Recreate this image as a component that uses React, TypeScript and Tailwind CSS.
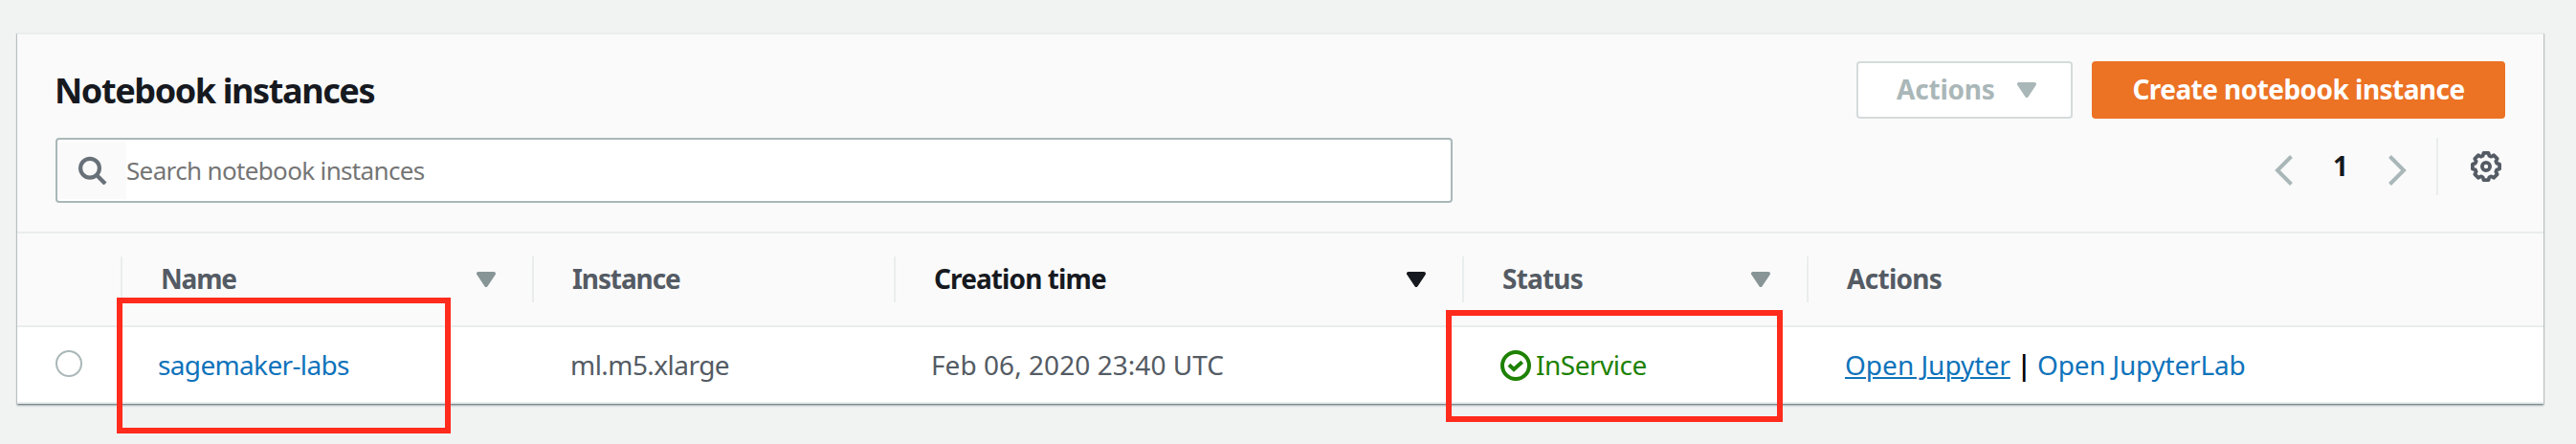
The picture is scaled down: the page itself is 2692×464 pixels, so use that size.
import React from 'react';
import { clsx } from 'clsx';

function Caret({ className }: { className: string }) {
  return (
    <svg viewBox="0 0 20 16" className={clsx('h-4 w-5 shrink-0', className)}>
      <path d="M2 2H18L10 14Z" fill="currentColor" stroke="currentColor" strokeWidth="4" strokeLinejoin="round" />
    </svg>
  );
}

function Chevron({ d }: { d: string }) {
  return (
    <svg viewBox="0 0 20 32" className="mt-2 h-8 w-5 text-[#aab7b8]">
      <path d={d} fill="none" stroke="currentColor" strokeWidth="4" />
    </svg>
  );
}

const polar = (r: number, deg: number) => {
  const a = (deg * Math.PI) / 180;
  return `${(16 + r * Math.sin(a)).toFixed(2)} ${(16 - r * Math.cos(a)).toFixed(2)}`;
};
const gearOutline =
  'M' +
  Array.from({ length: 8 }, (_, i) => i * 45)
    .flatMap((a) => [polar(11.7, a - 17), polar(14.3, a - 10), polar(14.3, a + 10), polar(11.7, a + 17)])
    .join('L') +
  'Z';

function Gear() {
  return (
    <svg viewBox="0 0 32 32" className="h-8 w-8 text-[#545b64]">
      <path d={gearOutline} fill="none" stroke="currentColor" strokeWidth="3.8" strokeLinejoin="round" />
      <circle cx="16" cy="16" r="4.1" fill="none" stroke="currentColor" strokeWidth="3.8" />
    </svg>
  );
}

function HeadCell({
  label,
  text,
  caret,
  dark,
  last,
}: {
  label: string;
  text: string;
  caret?: string;
  dark?: boolean;
  last?: boolean;
}) {
  return (
    <div
      className={clsx(
        'flex h-12 items-center justify-between pl-[38px] font-bold',
        !last && 'border-r-2 border-[#eaeded] pr-[38px]',
        dark ? 'text-[#16191f]' : 'text-[#545b64]',
      )}
    >
      <span className={clsx('pb-[2px]', text)}>{label}</span>
      {caret && <Caret className={caret} />}
    </div>
  );
}

const columns = 'grid grid-cols-[110px_430px_378px_594px_360px_769px] items-center';

export default function App() {
  return (
    <div className="relative h-[464px] w-[2692px] overflow-hidden bg-[#f1f3f3] pt-[34px] pl-[18px] font-['Noto_Sans',sans-serif] text-[28px] leading-10 whitespace-nowrap">
      <section className="w-[2640px] border-t-2 border-[#eaeded] bg-[#fafafa] shadow-[0_2px_2px_0_rgba(0,28,36,0.3),1px_1px_1px_0_rgba(0,28,36,0.15),-1px_1px_1px_0_rgba(0,28,36,0.15)]">
        <header className="flex h-[206px] justify-between pr-10 pl-10">
          <div className="pt-[35px]">
            <h1 className="-ml-px text-[36px] leading-[48px] font-bold tracking-[-1.4px] text-[#16191f]">
              Notebook instances
            </h1>
            <div className="mt-[25px] flex h-[68px] w-[1460px] items-center overflow-hidden rounded-[4px] border-2 border-[#aab7b8] bg-white">
              <div className="flex h-[60px] w-[72px] items-center bg-[#fafafa] pl-[22px]">
                <svg viewBox="0 0 30 30" className="h-[30px] w-[30px] text-[#687078]">
                  <circle cx="12" cy="12.7" r="9.9" fill="none" stroke="currentColor" strokeWidth="4.2" />
                  <path d="M19 20L28 29" fill="none" stroke="currentColor" strokeWidth="4.2" />
                </svg>
              </div>
              <span className="text-[26px] tracking-[-0.65px] text-[#757575]">Search notebook instances</span>
            </div>
          </div>
          <div className="flex flex-col items-end gap-5 pt-7">
            <div className="flex gap-5 font-bold">
              <button className="flex h-[60px] w-[226px] items-center rounded-[4px] border-2 border-[#d5dbdb] bg-white pl-10 text-[#aab7b8]">
                <span className="w-[126px] pb-[2px] text-left tracking-[-0.2px]">Actions</span>
                <Caret className="text-[#aab7b8]" />
              </button>
              <button className="flex h-[60px] w-[432px] items-center justify-center rounded-[4px] bg-[#ec7224] pb-[2px] tracking-[-0.55px] text-white">
                Create notebook instance
              </button>
            </div>
            <div className="flex h-[60px] items-center">
              <Chevron d="M18.5 1.5L4 16L18.5 30.5" />
              <span className="w-[100px] pb-[2px] text-center font-bold text-[#16191f]">1</span>
              <Chevron d="M1.5 1.5L16 16L1.5 30.5" />
              <div className="ml-[30px] flex h-[60px] items-center border-l-2 border-[#eaeded] pr-1 pl-[34px]">
                <Gear />
              </div>
            </div>
          </div>
        </header>

        <div className={clsx(columns, 'h-[100px] border-y-2 border-[#eaeded]')}>
          <div className="h-12 border-r-2 border-[#eaeded]" />
          <HeadCell label="Name" text="pl-[2px] tracking-[-1.2px]" caret="text-[#879596]" />
          <HeadCell label="Instance" text="pl-[2px] tracking-[-1.1px]" />
          <HeadCell label="Creation time" text="pl-[2px] tracking-[-0.9px]" caret="text-[#16191f]" dark />
          <HeadCell label="Status" text="pl-[2px] tracking-[-0.8px]" caret="text-[#879596]" />
          <HeadCell label="Actions" text="pl-[2px] tracking-[-0.7px]" last />
        </div>

        <div className={clsx(columns, 'h-20 border-b-2 border-[#eaeded] bg-white text-[#545b64]')}>
          <div className="pb-[2px] pl-10">
            <div className="h-7 w-7 rounded-full border-2 border-[#aab7b8] bg-white" />
          </div>
          <a className="pl-[37px] tracking-[-0.65px] text-[#0f73bb]">sagemaker-labs</a>
          <span className="pl-[38px] tracking-[-0.55px]">ml.m5.xlarge</span>
          <span className="pl-[37px] tracking-[0.05px]">Feb 06, 2020 23:40 UTC</span>
          <span className="flex items-center gap-[5px] pl-[38px] text-[#1d8102]">
            <svg viewBox="0 0 32 32" className="mt-[2px] h-8 w-8">
              <circle cx="16" cy="16" r="14" fill="none" stroke="currentColor" strokeWidth="4" />
              <path d="M9 15.3L14 20L22.7 12.2" fill="none" stroke="currentColor" strokeWidth="4" />
            </svg>
            <span className="tracking-[-0.5px]">InService</span>
          </span>
          <span className="pl-[38px] text-black">
            <a className="text-[#0f73bb] underline decoration-2 underline-offset-2">Open Jupyter</a>
            <span className="font-semibold tracking-[-0.6px]"> | </span>
            <a className="tracking-[-0.2px] text-[#0f73bb]">Open JupyterLab</a>
          </span>
        </div>
      </section>

      <div className="absolute top-[311px] left-[122px] h-[142px] w-[349px] border-6 border-[#ff2b1c]" />
      <div className="absolute top-[324px] left-[1511px] h-[117px] w-[352px] border-6 border-[#ff2b1c]" />
    </div>
  );
}
